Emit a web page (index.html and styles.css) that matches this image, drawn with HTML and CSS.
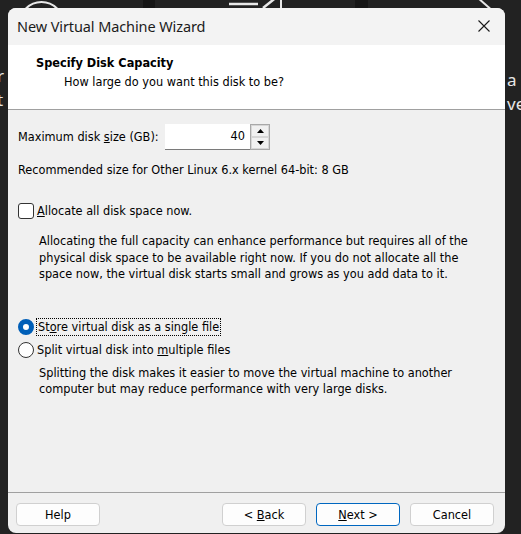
FILE: index.html
```html
<!DOCTYPE html>
<html>
<head>
<meta charset="utf-8">
<link rel="stylesheet" href="styles.css">
</head>
<body>
<div class="desktop">
  <svg class="bg-art" width="521" height="534" viewBox="0 0 521 534">
    <rect x="143" y="0" width="12" height="10" fill="#161616"/>
    <rect x="355" y="0" width="13" height="10" fill="#161616"/>
    <circle cx="41.5" cy="24" r="22" fill="none" stroke="#e8e8e8" stroke-width="2"/>
    <path d="M229 4 H258 M263 8 L278 -4" stroke="#e8e8e8" stroke-width="2.5" fill="none"/>
    <path d="M281 -2 V10" stroke="#e8e8e8" stroke-width="2" fill="none"/>
    <path d="M478 -2 L494 12" stroke="#e8e8e8" stroke-width="2" fill="none"/>
  </svg>
  <div class="bg-text left"><span>r</span><span>t</span></div>
  <div class="bg-text right"><span>a</span><span>ver</span></div>

  <div class="dialog">
    <div class="titlebar">
      <span class="title">New Virtual Machine Wizard</span>
      <svg class="close" width="12" height="12" viewBox="0 0 12 12"><path d="M0.5 0.5 L11.5 11.5 M11.5 0.5 L0.5 11.5" stroke="#1a1a1a" stroke-width="1.1"/></svg>
    </div>
    <div class="header">
      <div class="h-title">Specify Disk Capacity</div>
      <div class="h-sub">How large do you want this disk to be?</div>
    </div>
    <div class="body">
      <div class="size-row">
        <span class="label">Maximum disk <u>s</u>ize (GB):</span>
        <div class="spin">
          <div class="spin-input">40</div>
          <div class="spin-btns">
            <div class="spin-btn"><svg width="7" height="4" viewBox="0 0 7 4"><path d="M3.5 0 L7 4 L0 4 Z" fill="#000"/></svg></div>
            <div class="spin-btn"><svg width="7" height="4" viewBox="0 0 7 4"><path d="M0 0 L7 0 L3.5 4 Z" fill="#000"/></svg></div>
          </div>
        </div>
      </div>
      <div class="recommended">Recommended size for Other Linux 6.x kernel 64-bit: 8 GB</div>
      <div class="opt check-row">
        <span class="checkbox"></span>
        <span><u>A</u>llocate all disk space now.</span>
      </div>
      <p class="desc first">Allocating the full capacity can enhance performance but requires all of the physical disk space to be available right now. If you do not allocate all the space now, the virtual disk starts small and grows as you add data to it.</p>
      <div class="opt radio-row r1">
        <span class="radio on"></span>
        <span class="focus">St<u>o</u>re virtual disk as a single file</span>
      </div>
      <div class="opt radio-row r2">
        <span class="radio"></span>
        <span>Split virtual disk into <u>m</u>ultiple files</span>
      </div>
      <p class="desc second">Splitting the disk makes it easier to move the virtual machine to another computer but may reduce performance with very large disks.</p>
    </div>
    <div class="footer">
      <button class="btn">Help</button>
      <div class="spacer"></div>
      <button class="btn">&lt; <u>B</u>ack</button>
      <button class="btn primary"><u>N</u>ext &gt;</button>
      <button class="btn">Cancel</button>
    </div>
  </div>
</div>
</body>
</html>
```

FILE: styles.css
```css
html, body {
  margin: 0;
  padding: 0;
}
body {
  width: 521px;
  height: 534px;
  overflow: hidden;
  background: #202020;
  font-family: "DejaVu Sans Condensed", "DejaVu Sans", sans-serif;
}
.desktop {
  position: relative;
  width: 521px;
  height: 534px;
  overflow: hidden;
  background: #222222;
}
.bg-art {
  position: absolute;
  left: 0;
  top: 0;
}
.bg-text {
  position: absolute;
  display: flex;
  flex-direction: column;
  font-family: "Noto Sans", sans-serif;
  font-size: 17px;
  line-height: 24px;
  color: #e6e6e6;
}
.bg-text.left {
  left: -3px;
  top: 64px;
}
.bg-text.right {
  left: 507px;
  top: 68px;
}
.dialog {
  position: absolute;
  left: 8px;
  top: 8px;
  width: 497px;
  height: 525px;
  background: #f0f0f0;
  border-radius: 8px;
  overflow: hidden;
  display: flex;
  flex-direction: column;
}
.titlebar {
  height: 37px;
  background: #f3f3f3;
  display: flex;
  align-items: center;
  justify-content: space-between;
  padding: 0 15px 0 9px;
  flex: none;
}
.title {
  font-family: "Noto Sans", sans-serif;
  font-size: 14.5px;
  color: #1b1b1b;
  letter-spacing: -0.1px;
  margin-top: -1px;
}
.close {
  margin-top: -2px;
}
.header {
  height: 64px;
  background: #ffffff;
  border-bottom: 1px solid #a0a0a0;
  flex: none;
  font-size: 12.6px;
  color: #000;
}
.h-title {
  font-weight: bold;
  margin: 10px 0 0 28px;
  line-height: 16px;
}
.h-sub {
  margin: 3px 0 0 56px;
  line-height: 16px;
}
.body {
  flex: 1;
  font-size: 12.6px;
  color: #000;
  padding: 0 10px;
  line-height: 16px;
}
.size-row {
  display: flex;
  align-items: center;
  margin-top: 14px;
  height: 26px;
}
.label {
  width: 147px;
}
.spin {
  display: flex;
  height: 26px;
}
.spin-input {
  width: 80px;
  height: 25px;
  background: #fff;
  border-bottom: 1px solid #7a7a7a;
  text-align: right;
  padding-right: 5px;
  line-height: 24px;
}
.spin-btns {
  display: flex;
  flex-direction: column;
  width: 20px;
  border: 1px solid #a8a8a8;
  box-sizing: border-box;
  background: #f0f0f0;
}
.spin-btn {
  flex: 1;
  display: flex;
  align-items: center;
  justify-content: center;
  border: 1px solid #d6d6d6;
  box-sizing: border-box;
}
.recommended {
  margin-top: 12px;
}
.opt {
  display: flex;
  align-items: center;
  gap: 3px;
  height: 18px;
}
.check-row {
  margin-top: 24px;
}
.checkbox {
  width: 14px;
  height: 14px;
  border: 1px solid #333;
  border-radius: 3px;
  background: #fff;
  flex: none;
}
.desc {
  margin: 0;
  padding-left: 21px;
  line-height: 16.5px;
  width: 440px;
}
.desc.first {
  margin-top: 13px;
}
.r1 {
  margin-top: 35px;
}
.r2 {
  margin-top: 5px;
}
.radio {
  width: 14px;
  height: 14px;
  border: 1px solid #333;
  border-radius: 50%;
  background: #fff;
  flex: none;
  box-sizing: content-box;
}
.radio.on {
  width: 6px;
  height: 6px;
  border: 5px solid #005fb8;
  background: #fff;
}
.focus {
  outline: 1px dotted #000;
  outline-offset: 0;
  padding: 0 1px;
}
.desc.second {
  margin-top: 6px;
}
.footer {
  flex: none;
  height: 41px;
  border-top: 1px solid #a0a0a0;
  display: flex;
  align-items: flex-start;
  padding: 10px 11px 0 8px;
  gap: 10px;
  box-sizing: border-box;
}
.spacer {
  flex: 1;
}
.btn {
  width: 84px;
  height: 23px;
  background: #fdfdfd;
  border: 1px solid #d0d0d0;
  border-radius: 4px;
  font-family: "DejaVu Sans Condensed", "DejaVu Sans", sans-serif;
  font-size: 12.6px;
  color: #000;
  padding: 0;
}
.btn.primary {
  border-color: #0067c0;
}
u {
  text-decoration: underline;
  text-underline-offset: 1px;
}
```
